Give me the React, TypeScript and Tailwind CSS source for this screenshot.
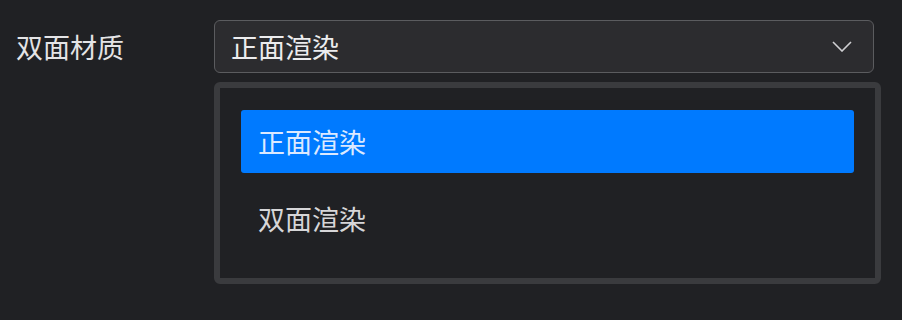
const options = ["正面渲染", "双面渲染"];

const ChevronDown = () => (
  <svg width="20" height="11" viewBox="0 0 20 11" fill="none">
    <path d="M1 1l9 9 9-9" stroke="#cfcfd2" strokeWidth="1.6" />
  </svg>
);

const App = () => {
  const selected = options[0];

  return (
    <div
      className="h-[320px] w-[902px] bg-[#202124] pt-5 pl-4 text-[27px] leading-none"
      style={{ fontFamily: '"Noto Sans CJK SC", "Noto Sans", sans-serif' }}
    >
      <div className="flex items-start">
        {/* Label */}
        <div className="flex h-[53px] w-[198px] items-center text-[#e4e4e6]">双面材质</div>

        <div className="flex flex-col">
          {/* Trigger */}
          <div className="flex h-[53px] w-[660px] items-center justify-between rounded-[6px] border border-[#5b5c5f] bg-[#2c2c2f] pl-[16px] pr-[21px] text-[#ececee]">
            <span>{selected}</span>
            <ChevronDown />
          </div>

          {/* Menu */}
          <div className="mt-[9px] flex w-[667px] flex-col gap-[14px] rounded-[6px] border-[6px] border-[#3a3b3e] bg-[#202124] px-[21px] pt-[22px] pb-[28px]">
            {options.map((o) => (
              <div
                key={o}
                className={
                  o === selected
                    ? "flex h-[63px] items-center rounded-[3px] bg-[#007aff] pl-[17px] text-[#dce9ff]"
                    : "flex h-[63px] items-center rounded-[3px] pl-[17px] text-[#d6d6d8]"
                }
              >
                {o}
              </div>
            ))}
          </div>
        </div>
      </div>
    </div>
  );
};

export default App;
